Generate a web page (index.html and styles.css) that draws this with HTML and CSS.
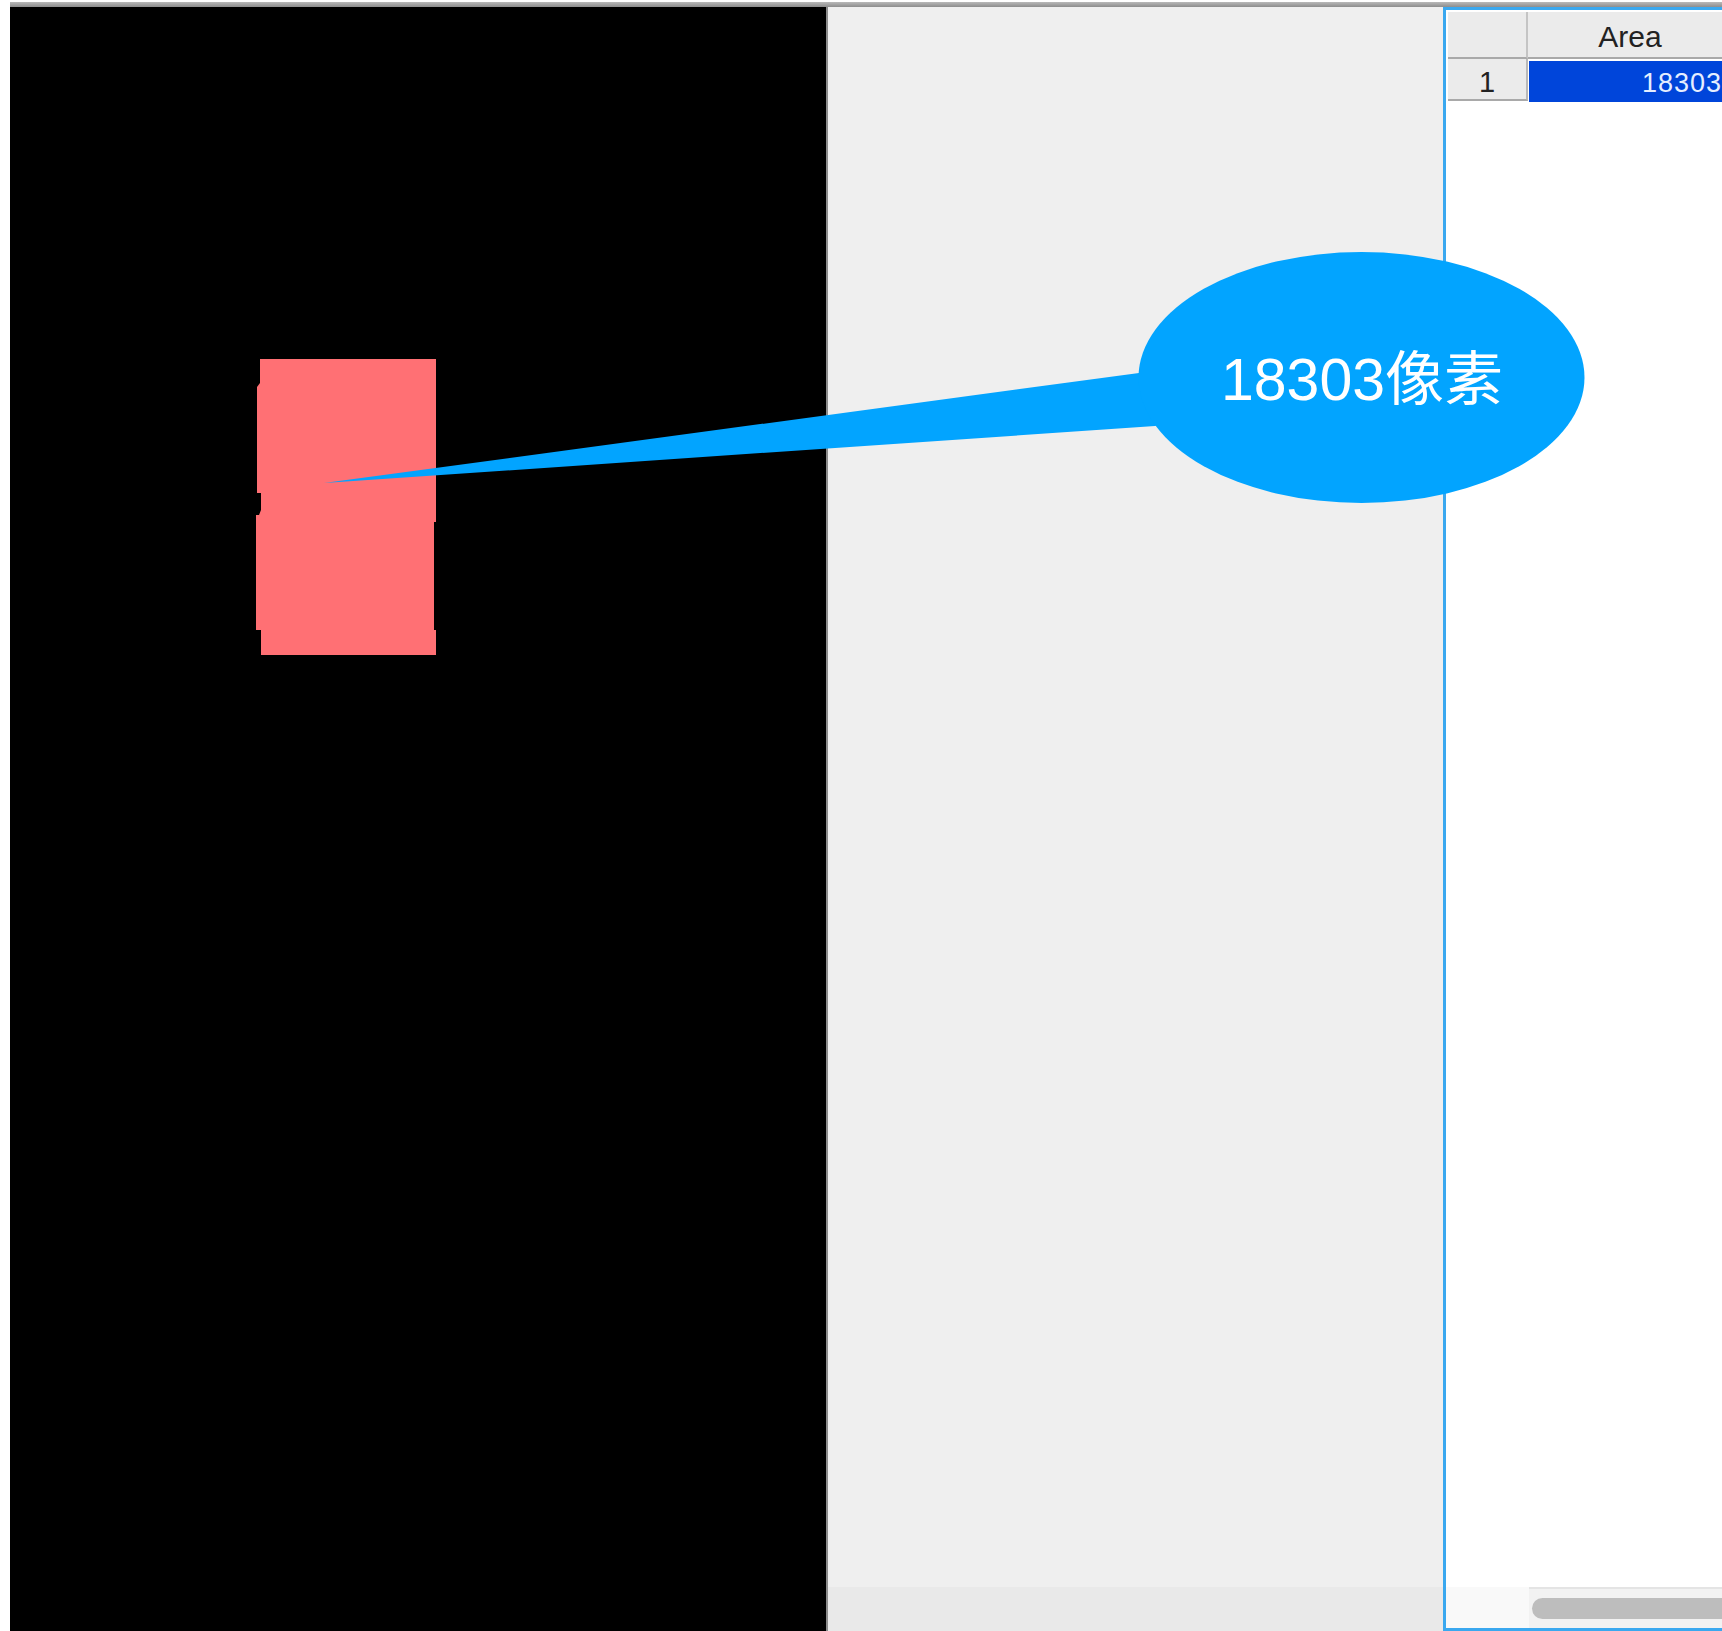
FILE: index.html
```html
<!DOCTYPE html>
<html lang="zh-CN">
<head>
<meta charset="utf-8">
<title>Area</title>
<link rel="stylesheet" href="styles.css">
</head>
<body>
<div class="window">
  <div class="titlebar"></div>
  <div class="panes">
    <div class="canvas">
      <svg class="canvas-image" viewBox="10 7 816 1624" width="816" height="1624">
        <polygon class="blob" points="260,359 436,359 436,522 434,522 434,630 436,630 436,655 261,655 261,630 256,630 256,515 259,515 261,510 261,493 257,493 257,387 260,383"/>
      </svg>
    </div>
    <div class="side">
      <div class="side-body"></div>
      <div class="side-foot"></div>
    </div>
    <div class="results">
      <div class="grid">
        <div class="corner"></div>
        <div class="col-head">Area</div>
        <div class="row-head">1</div>
        <div class="cell selected">18303</div>
      </div>
      <div class="filler"></div>
      <div class="hscroll">
        <div class="hscroll-corner"></div>
        <div class="hscroll-track"><div class="hscroll-thumb"></div></div>
      </div>
    </div>
  </div>
  <svg class="callout" viewBox="10 2 1712 1629" width="1712" height="1629">
    <polygon class="bubble" points="324,483 1139,373 1250,400 1155,426"/>
    <ellipse class="bubble" cx="1361.5" cy="377.5" rx="223" ry="125.5"/>
    <text class="bubble-text" x="1362" y="400" text-anchor="middle">18303像素</text>
  </svg>
</div>
</body>
</html>
```
FILE: styles.css
```css
html, body {
  margin: 0;
  padding: 0;
  background: #ffffff;
  overflow: hidden;
}

.window {
  position: relative;
  margin: 2px 0 0 10px;
  width: 1712px;
  height: 1629px;
  overflow: hidden;
  font-family: "Liberation Sans", "Noto Sans CJK SC", sans-serif;
}

.titlebar {
  height: 5px;
  background: linear-gradient(#b9b9b9, #8d8d8d);
}

.panes {
  display: flex;
  height: 1624px;
}

/* image view */
.canvas {
  width: 816px;
  flex: none;
  background: #000000;
}

.canvas-image {
  display: block;
}

.blob {
  fill: #ff7074;
}

/* empty middle panel */
.side {
  width: 615px;
  flex: none;
  display: flex;
  flex-direction: column;
  border-left: 2px solid #8c8c8c;
}

.side-body {
  flex: 1;
  background: #efefef;
}

.side-foot {
  height: 44px;
  background: #e9e9e9;
}

/* results table */
.results {
  flex: 1;
  min-width: 0;
  display: flex;
  flex-direction: column;
  border: 3px solid #3aa8ef;
  border-right: none;
  background: #ffffff;
  overflow: hidden;
}

.grid {
  display: grid;
  grid-template-columns: 80px 204px;
  grid-template-rows: 47px 43px;
  width: max-content;
  margin: 2px 0 0 2px;
}

.corner,
.col-head,
.row-head {
  background: #ebebeb;
  box-sizing: border-box;
  border-bottom: 2px solid #a9a9a9;
}

.corner {
  border-right: 2px solid #c4c4c4;
}

.col-head {
  font-size: 30px;
  color: #222222;
  text-align: center;
  line-height: 42px;
  padding-top: 4px;
}

.row-head {
  border-right: 2px solid #b9b9b9;
  font-size: 29px;
  color: #222222;
  text-align: center;
  line-height: 36px;
  padding-top: 5px;
  margin-bottom: 1px;
}

.cell {
  box-sizing: border-box;
  margin: 2px 0 0 1px;
  font-size: 27px;
  line-height: 36px;
  padding-top: 4px;
  text-align: right;
  padding-right: 10px;
  letter-spacing: 1px;
}

.selected {
  background: #0045da;
  color: #e6eeff;
}

.filler {
  flex: 1;
}

.hscroll {
  height: 41px;
  display: flex;
}

.hscroll-corner {
  width: 83px;
  flex: none;
  background: #f9f9f9;
}

.hscroll-track {
  flex: 1;
  background: #f2f2f2;
  border-top: 2px solid #e4e4e4;
  padding: 9px 0 0 3px;
}

.hscroll-thumb {
  height: 21px;
  width: 400px;
  border-radius: 11px;
  background: #bdbdbd;
}

/* annotation overlay */
.callout {
  position: absolute;
  top: 0;
  left: 0;
}

.bubble {
  fill: #02a4ff;
}

.bubble-text {
  fill: #ffffff;
  font-family: "Liberation Sans", "Noto Sans CJK SC", sans-serif;
  font-size: 59px;
}
```
